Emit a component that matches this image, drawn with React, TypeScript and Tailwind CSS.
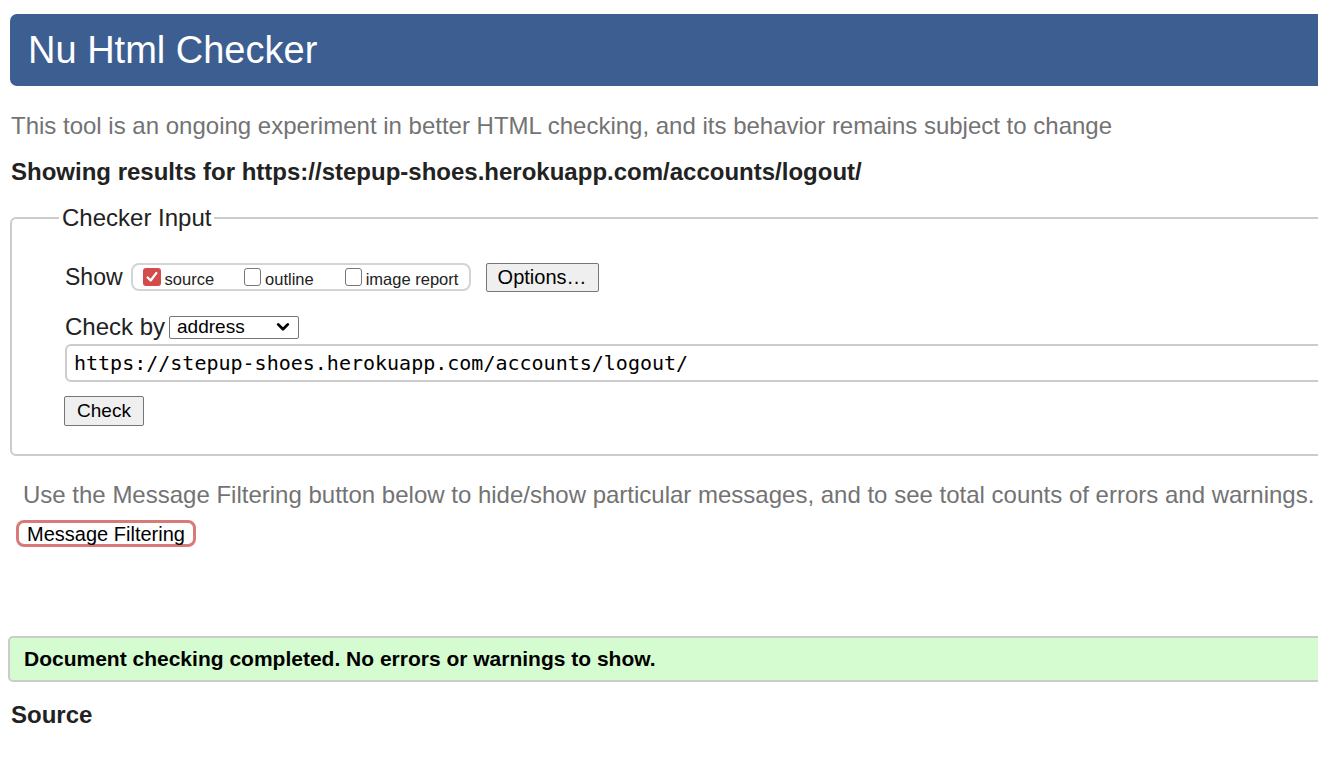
import React from "react";

const sans = "font-['Liberation_Sans',Arial,sans-serif]";

const Box = ({ checked, label }: { checked?: boolean; label: string }) => (
    <label className="flex items-center">
        {checked ? (
            <span className="flex h-[18px] w-[18px] items-center justify-center rounded-[3px] bg-[#d44b4b]">
                <svg viewBox="0 0 16 16" className="h-[14px] w-[14px]">
                    <path d="M3 8.5 L6.5 12 L13 3.5" fill="none" stroke="white" strokeWidth="2.6" strokeLinecap="round" strokeLinejoin="round" />
                </svg>
            </span>
        ) : (
            <span className="h-[18px] w-[17px] rounded-[3px] border border-[#777] bg-white" />
        )}
        <span className="ml-[4px] pt-[3px] text-[16.5px] leading-[20px] text-[#222]">{label}</span>
    </label>
);

const App: React.FC = () => {
    return (
        <div className={`w-[1318px] h-[758px] overflow-hidden bg-white ${sans}`}>
            <div className="w-[1360px]">
                <div className="mt-[14px] ml-[10px] flex h-[72px] items-center rounded-l-[7px] bg-[#3d5e91] pl-[18px]">
                    <h1 className="text-[38px] leading-[44px] text-white">Nu Html Checker</h1>
                </div>

                <p className="mt-[26px] ml-[11px] text-[24px] leading-[28px] text-[#737373]">
                    This tool is an ongoing experiment in better HTML checking, and its behavior remains subject to change
                </p>
                <p className="mt-[18px] ml-[11px] text-[24px] font-bold leading-[28px] text-[#222]">
                    Showing results for https://stepup-shoes.herokuapp.com/accounts/logout/
                </p>

                <fieldset className="mt-[19px] ml-[10px] rounded-[6px] border-2 border-[#cccccc] pl-[53px] pb-[28px]">
                    <legend className="-ml-[6px] px-[3px] text-[24px] leading-[26px] text-[#222]">Checker Input</legend>

                    <div className="mt-[31px] flex h-[30px] items-center">
                        <span className="text-[23px] text-[#222]">Show</span>
                        <div className="ml-[8px] flex h-[28px] w-[340px] items-center rounded-[8px] border-2 border-[#d4d4d4] pl-[10px]">
                            <Box checked label="source" />
                            <span className="w-[30px]" />
                            <Box label="outline" />
                            <span className="w-[31px]" />
                            <Box label="image report" />
                        </div>
                        <button className="ml-[15px] h-[29px] w-[113px] rounded-[2px] border border-[#767676] bg-[#efefef] text-[20px] leading-[26px] text-black">
                            Options…
                        </button>
                    </div>

                    <div className="mt-[22px] flex h-[26px] items-center">
                        <span className="text-[24px] text-[#222]">Check by</span>
                        <div className="ml-[4px] flex h-[23px] w-[130px] items-center justify-between rounded-[2px] border border-[#767676] bg-white pl-[7px] pr-[6px]">
                            <span className="text-[19px] leading-[22px] text-black">address</span>
                            <svg viewBox="0 0 16 16" className="h-[14px] w-[18px]">
                                <path d="M2.5 5 L8 10.5 L13.5 5" fill="none" stroke="black" strokeWidth="3.2" strokeLinecap="round" strokeLinejoin="round" />
                            </svg>
                        </div>
                    </div>

                    <div className="mt-[4px] flex h-[38px] items-center rounded-[6px] border-2 border-[#cccccc] pl-[7px]">
                        <span className="font-['DejaVu_Sans_Mono',monospace] text-[20px] leading-[24px] text-black">
                            https://stepup-shoes.herokuapp.com/accounts/logout/
                        </span>
                    </div>

                    <button className="mt-[14px] -ml-[1px] block h-[30px] w-[80px] rounded-[2px] border border-[#767676] bg-[#efefef] text-[19px] leading-[26px] text-black">
                        Check
                    </button>
                </fieldset>

                <p className="mt-[25px] ml-[23px] text-[24px] leading-[28px] text-[#737373]">
                    Use the Message Filtering button below to hide/show particular messages, and to see total counts of errors and warnings.
                </p>
                <button className="mt-[11px] ml-[16px] block h-[27px] w-[180px] rounded-[8px] border-[3px] border-[#d87b78] bg-white text-[20px] leading-[20px] text-black">
                    Message Filtering
                </button>

                <div className="mt-[89px] ml-[8px] flex h-[46px] items-center rounded-[5px] border-2 border-[#cccccc] bg-[#d5fcd0] pl-[14px]">
                    <span className="text-[21px] font-bold text-black">Document checking completed. No errors or warnings to show.</span>
                </div>

                <h2 className="mt-[19px] ml-[11px] text-[24px] font-bold leading-[28px] text-[#222]">Source</h2>
            </div>
        </div>
    );
};

export default App;
